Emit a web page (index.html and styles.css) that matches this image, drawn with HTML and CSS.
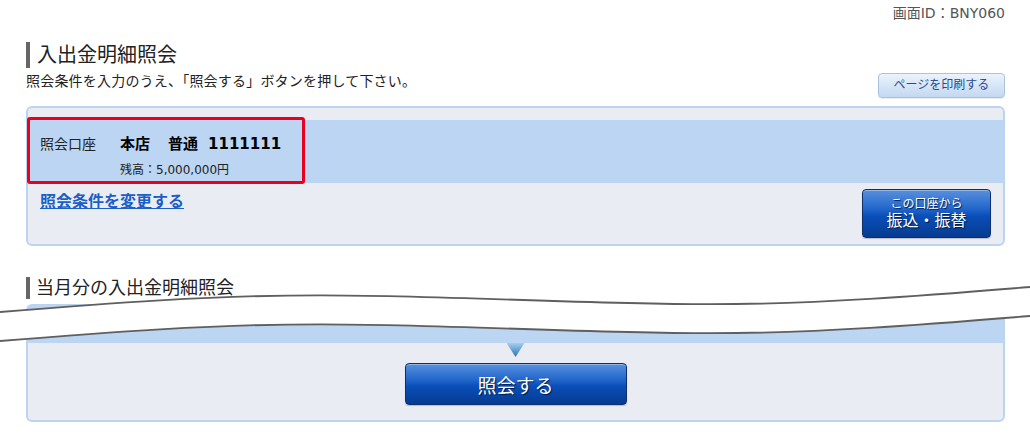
FILE: index.html
```html
<!DOCTYPE html>
<html lang="ja">
<head>
    <meta charset="UTF-8">
    <meta name="viewport" content="width=device-width, initial-scale=1.0">
    <title>入出金明細照会</title>
    <link rel="stylesheet" href="styles.css">
</head>
<body>
    <div class="page">
        <div class="screen-id">画面ID：BNY060</div>

        <h1 class="page-title">入出金明細照会</h1>

        <div class="lead-row">
            <p class="lead">照会条件を入力のうえ、「照会する」ボタンを押して下さい。</p>
            <a href="#" class="print-btn">ページを印刷する</a>
        </div>

        <div class="panel">
            <div class="band">
                <div class="account">
                    <span class="account-label">照会口座</span>
                    <span class="account-name"><span class="branch">本店</span><span class="kind">普通</span>1111111</span>
                    <span class="account-balance">残高：5,000,000円</span>
                </div>
            </div>
            <div class="panel-foot">
                <a href="#" class="change-link">照会条件を変更する</a>
                <a href="#" class="blue-btn transfer-btn">
                    <span class="small">この口座から</span>
                    <span class="large">振込・振替</span>
                </a>
            </div>
        </div>

        <h2 class="section-title">当月分の入出金明細照会</h2>

        <div class="panel result-panel">
            <div class="band short"></div>
            <div class="result-body">
                <div class="arrow-down"></div>
                <a href="#" class="blue-btn submit-btn">照会する</a>
            </div>
        </div>
    </div>

    <!-- omitted-content cut -->
    <svg class="cut" width="1030" height="360" viewBox="0 0 1030 360">
        <path fill="#fff" d="M0,312 C107,303.2 213,295.3 320,295.3 C450,295.3 580,304.2 710,304.2 C817,304.2 923,295.8 1030,287 L1030,316 C923,324.8 817,333.2 710,333.2 C580,333.2 450,324.3 320,324.3 C213,324.3 107,332.2 0,341 Z"/>
        <path fill="none" stroke="#5f5f5f" stroke-width="1.8" d="M0,312 C107,303.2 213,295.3 320,295.3 C450,295.3 580,304.2 710,304.2 C817,304.2 923,295.8 1030,287"/>
        <path fill="none" stroke="#5f5f5f" stroke-width="1.8" d="M0,341 C107,332.2 213,324.3 320,324.3 C450,324.3 580,333.2 710,333.2 C817,333.2 923,324.8 1030,316"/>
    </svg>
</body>
</html>
```

FILE: styles.css
```css
body {
    font-family: "DejaVu Sans", "Noto Sans CJK JP", sans-serif;
    color: #222;
    background-color: #fff;
    margin: 0;
    padding: 0;
    position: relative;
}
a {
    text-decoration: none;
}
.page {
    padding: 0 25px 0 26px;
}
.screen-id {
    text-align: right;
    font-size: 14px;
    line-height: 20px;
    padding-top: 3px;
    color: #555;
}
.page-title {
    margin: 19px 0 0;
    border-left: 4px solid #666;
    padding-left: 7px;
    font-size: 20px;
    line-height: 26px;
    font-weight: normal;
    color: #222;
}
.lead-row {
    display: flex;
    justify-content: space-between;
    margin-top: 4px;
    height: 26px;
}
.lead {
    margin: 0;
    font-size: 14px;
    line-height: 18px;
    letter-spacing: 0.2px;
}
.print-btn {
    margin-top: 1px;
    width: 127px;
    height: 25px;
    box-sizing: border-box;
    text-align: center;
    font-size: 12px;
    line-height: 23px;
    color: #264a8e;
    background: linear-gradient(#ebf3fd, #c3d8f1);
    border: 1px solid #a9c2e1;
    border-radius: 4px;
    box-shadow: 0 1px 0 rgba(0, 0, 0, 0.08);
}
.panel {
    margin-top: 8px;
    border: 2px solid #bdd4f1;
    border-radius: 6px;
    background-color: #e9edf3;
    padding-top: 12px;
}
.band {
    display: flex;
    height: 63px;
    background-color: #bbd5f3;
}
.account {
    display: grid;
    grid-template-columns: 80px auto;
    align-content: start;
    box-sizing: border-box;
    width: 278px;
    height: 67px;
    margin: -3px 0 -1px -1px;
    padding: 14px 0 0 10px;
    border: 3px solid #e8001e;
    border-radius: 3px;
}
.account-label {
    font-size: 14px;
    line-height: 20px;
    color: #222;
}
.account-name {
    font-size: 15px;
    line-height: 20px;
    font-weight: bold;
    color: #000;
}
.account-name .branch {
    margin-right: 18px;
}
.account-name .kind {
    margin-right: 10px;
}
.account-balance {
    grid-column: 2;
    margin-top: 8px;
    font-size: 12px;
    line-height: 16px;
    color: #222;
}
.panel-foot {
    display: flex;
    justify-content: space-between;
    align-items: flex-start;
    padding: 6px 12px;
}
.change-link {
    margin-top: 3px;
    font-size: 16px;
    line-height: 20px;
    font-weight: bold;
    color: #1b5ec6;
    text-decoration: underline;
}
.blue-btn {
    display: flex;
    flex-direction: column;
    align-items: center;
    justify-content: center;
    box-sizing: border-box;
    color: #fff;
    text-shadow: 1px 1px 1px #001a44;
    background: linear-gradient(#5890dc 0%, #2266cc 40%, #0a4fba 55%, #063b90 100%);
    border: 1px solid #0f2f6c;
    border-radius: 4px;
    box-shadow: inset 0 1px 0 rgba(255, 255, 255, 0.35), 0 1px 1px rgba(0, 0, 0, 0.2);
}
.transfer-btn {
    width: 129px;
    height: 49px;
}
.transfer-btn .small {
    font-size: 12px;
    line-height: 14px;
}
.transfer-btn .large {
    font-size: 16px;
    line-height: 19px;
}
.section-title {
    margin: 31px 0 0;
    border-left: 4px solid #666;
    padding-left: 6px;
    font-size: 18px;
    line-height: 22px;
    font-weight: normal;
    color: #222;
}
.result-panel {
    margin-top: 5px;
    padding-top: 0;
}
.band.short {
    height: 37px;
}
.result-body {
    display: flex;
    flex-direction: column;
    align-items: center;
    padding-bottom: 15px;
}
.arrow-down {
    width: 18px;
    height: 14px;
    background: linear-gradient(#a3cff0, #2c6fbc);
    clip-path: polygon(0 0, 100% 0, 50% 100%);
}
.submit-btn {
    margin-top: 6px;
    width: 222px;
    height: 42px;
    font-size: 19px;
}
.cut {
    position: absolute;
    top: 0;
    left: 0;
    pointer-events: none;
}
```
